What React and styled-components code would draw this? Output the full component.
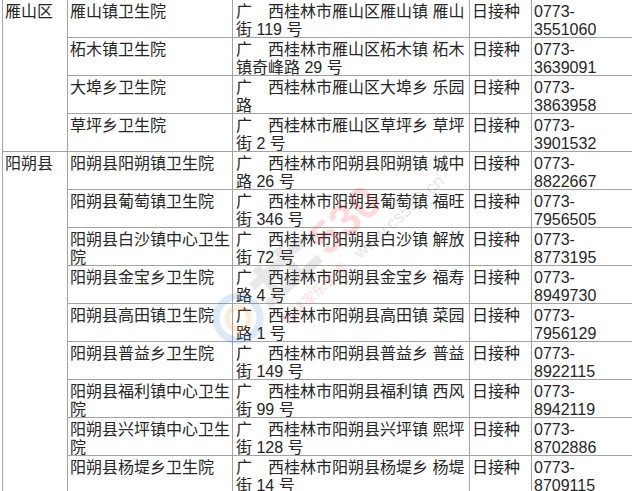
import React from "react";
import styled, { createGlobalStyle } from "styled-components";

const GlobalStyle = createGlobalStyle`
  html, body {
    margin: 0;
    padding: 0;
    background: #ffffff;
    overflow: hidden;
  }
  body {
    font-family: "Liberation Sans", "Noto Sans CJK SC", sans-serif;
    color: #262626;
  }
`;

const Page = styled.div`
  position: relative;
  width: 632px;
  height: 491px;
  overflow: hidden;
  padding-left: 2px;
  box-sizing: border-box;
`;

const Table = styled.div`
  width: 700px;
  border-top: 1px solid #a3a3a3;
  border-left: 1px solid #a3a3a3;
  margin-top: -1px;
`;

const Group = styled.div`
  display: flex;
  border-bottom: 1px solid #a3a3a3;
`;

const District = styled.div`
  width: 65px;
  flex: none;
  border-right: 1px solid #a3a3a3;
  box-sizing: border-box;
  padding: 3px 0 0 2px;
  font-size: 16px;
  line-height: 18px;
`;

const Rows = styled.div`
  flex: 1;
  display: flex;
  flex-direction: column;
`;

const Row = styled.div`
  display: grid;
  grid-template-columns: 165px 237px 62px 1fr;
  height: 38px;
  box-sizing: border-box;
  border-bottom: ${(p) => (p.$last ? "none" : "1px solid #a3a3a3")};
  height: ${(p) => (p.$last ? "37px" : "38px")};
`;

const Cell = styled.div`
  box-sizing: border-box;
  border-right: ${(p) => (p.$open ? "none" : "1px solid #a3a3a3")};
  padding: 3px 0 0 ${(p) => p.$pad || 2}px;
  font-size: 16px;
  line-height: 18px;
  white-space: pre;
  overflow: hidden;
`;

const Watermark = styled.svg`
  position: absolute;
  left: 0;
  top: 0;
  pointer-events: none;
`;

const data = [
  {
    district: "雁山区",
    rows: [
      ["雁山镇卫生院", "广　西桂林市雁山区雁山镇 雁山\n街 119 号", "3551060"],
      ["柘木镇卫生院", "广　西桂林市雁山区柘木镇 柘木\n镇奇峰路 29 号", "3639091"],
      ["大埠乡卫生院", "广　西桂林市雁山区大埠乡 乐园\n路", "3863958"],
      ["草坪乡卫生院", "广　西桂林市雁山区草坪乡 草坪\n街 2 号", "3901532"],
    ],
  },
  {
    district: "阳朔县",
    rows: [
      ["阳朔县阳朔镇卫生院", "广　西桂林市阳朔县阳朔镇 城中\n路 26 号", "8822667"],
      ["阳朔县葡萄镇卫生院", "广　西桂林市阳朔县葡萄镇 福旺\n街 346 号", "7956505"],
      ["阳朔县白沙镇中心卫生\n院", "广　西桂林市阳朔县白沙镇 解放\n街 72 号", "8773195"],
      ["阳朔县金宝乡卫生院", "广　西桂林市阳朔县金宝乡 福寿\n路 4 号", "8949730"],
      ["阳朔县高田镇卫生院", "广　西桂林市阳朔县高田镇 菜园\n路 1 号", "7956129"],
      ["阳朔县普益乡卫生院", "广　西桂林市阳朔县普益乡 普益\n街 149 号", "8922115"],
      ["阳朔县福利镇中心卫生\n院", "广　西桂林市阳朔县福利镇 西风\n街 99 号", "8942119"],
      ["阳朔县兴坪镇中心卫生\n院", "广　西桂林市阳朔县兴坪镇 熙坪\n街 128 号", "8702886"],
      ["阳朔县杨堤乡卫生院", "广　西桂林市阳朔县杨堤乡 杨堤\n街 14 号", "8709115"],
    ],
  },
];

function Logo() {
  return (
    <Watermark width="632" height="491" viewBox="0 0 632 491">
      <g opacity="0.16" transform="rotate(-42 300 260)">
        <circle cx="215" cy="262" r="22" fill="none" stroke="#2f7fd6" strokeWidth="7" />
        <circle cx="215" cy="262" r="11" fill="none" stroke="#f08a1c" strokeWidth="5" />
        <path d="M246 248 h70 M262 236 v36 M290 236 v36 M246 272 h70" stroke="#777" strokeWidth="9" fill="none" />
        <text x="322" y="276" fontSize="46" fontWeight="bold" fill="#e8262c" fontFamily="Liberation Sans, sans-serif">530</text>
        <text x="246" y="300" fontSize="14" fill="#e8262c" fontFamily="Noto Sans CJK SC, sans-serif">桂林家乐新事</text>
        <text x="345" y="300" fontSize="18" fill="#666" fontFamily="Liberation Sans, sans-serif">www.cs530.cn</text>
      </g>
    </Watermark>
  );
}

export default function App() {
  return (
    <>
      <GlobalStyle />
      <Page>
        <Table>
          {data.map((g) => (
            <Group key={g.district}>
              <District>{g.district}</District>
              <Rows>
                {g.rows.map((r, i) => (
                  <Row key={r[0]} $last={i === g.rows.length - 1}>
                    <Cell>{r[0]}</Cell>
                    <Cell $pad={3}>{r[1]}</Cell>
                    <Cell>日接种</Cell>
                    <Cell $open>{"0773-\n" + r[2]}</Cell>
                  </Row>
                ))}
              </Rows>
            </Group>
          ))}
        </Table>
        <Logo />
      </Page>
    </>
  );
}
